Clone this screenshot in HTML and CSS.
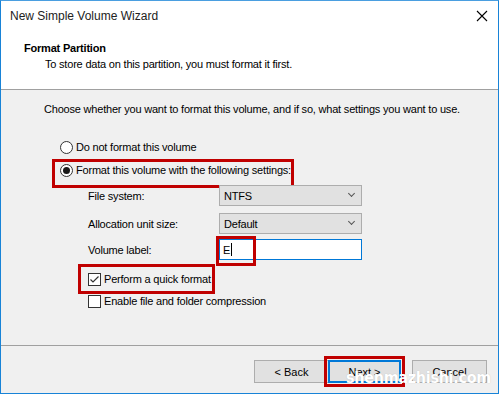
FILE: index.html
```html
<!DOCTYPE html>
<html>
<head>
	<title>New Simple Volume Wizard</title>
	<meta charset="utf-8">
	<link rel="stylesheet" href="styles.css">
</head>
<body>
<div class="window">
	<div class="titlebar">
		<span class="title">New Simple Volume Wizard</span>
		<svg class="close" width="12" height="12" viewBox="0 0 12 12"><path d="M1 1L11 11M11 1L1 11" stroke="#000" stroke-width="1.1"/></svg>
	</div>
	<div class="header">
		<div class="h-title">Format Partition</div>
		<div class="h-sub">To store data on this partition, you must format it first.</div>
	</div>
	<div class="main">
		<div class="intro">Choose whether you want to format this volume, and if so, what settings you want to use.</div>
		<div class="options">
			<div class="row radio-row">
				<span class="radio"></span>Do not format this volume
			</div>
			<div class="row radio-row marked mark-fmt">
				<span class="radio on"></span>Format this volume with the following settings:
			</div>
			<div class="settings">
				<div class="field">
					<span class="label">File system:</span>
					<div class="select">NTFS<span class="chev"></span></div>
				</div>
				<div class="field">
					<span class="label">Allocation unit size:</span>
					<div class="select">Default<span class="chev"></span></div>
				</div>
				<div class="field">
					<span class="label">Volume label:</span>
					<div class="input"><span class="val">E</span><span class="caret"></span><span class="mark-e"></span></div>
				</div>
				<div class="row check-row marked mark-quick">
					<span class="check on"><svg width="11" height="11" viewBox="0 0 11 11"><path d="M1.5 5.5L4 8L9.5 2.5" fill="none" stroke="#333" stroke-width="1.2"/></svg></span>Perform a quick format
				</div>
				<div class="row check-row">
					<span class="check"></span>Enable file and folder compression
				</div>
			</div>
		</div>
	</div>
	<div class="footer">
		<button class="btn">&lt; Back</button>
		<span class="next-mark"><button class="btn default">Next &gt;</button></span>
		<button class="btn">Cancel</button>
		<span class="watermark">shenmazhishi.com</span>
	</div>
</div>
</body>
</html>
```

FILE: styles.css
```css
*{
	margin: 0;
	padding: 0;
	box-sizing: border-box;
}
body{
	width: 499px;
	height: 394px;
	font-family: "Liberation Sans", Arial, sans-serif;
	font-size: 11px;
	letter-spacing: -0.2px;
	color: #000;
	background: #fff;
}
.window{
	width: 499px;
	height: 394px;
	border: 1px solid #1883d7;
	border-top-color: #4a9ee0;
	display: flex;
	flex-direction: column;
	background: #f0f0f0;
	position: relative;
}
.titlebar{
	height: 29px;
	background: #fff;
	display: flex;
	align-items: center;
	justify-content: space-between;
	padding: 0 10px 0 9px;
	font-size: 12px;
	letter-spacing: 0;
	color: #222;
}
.close{
	margin-top: 1px;
}
.header{
	height: 60px;
	background: #fff;
	border-bottom: 1px solid #a0a0a0;
	padding: 11px 0 0 23px;
}
.h-title{
	font-weight: bold;
	line-height: 15px;
}
.h-sub{
	padding-left: 21px;
	line-height: 15px;
	margin-top: 1px;
}
.main{
	flex: 1;
	padding: 12px 0 0 43px;
	border-bottom: 1px solid #a0a0a0;
}
.intro{
	line-height: 15px;
}
.options{
	margin-top: 23px;
	padding-left: 16px;
}
.row{
	display: flex;
	align-items: center;
	height: 15px;
	line-height: 15px;
}
.radio-row{
	margin-bottom: 8px;
}
.radio{
	width: 13px;
	height: 13px;
	border: 1px solid #333;
	border-radius: 50%;
	background: #fff;
	margin-right: 3px;
	display: flex;
	align-items: center;
	justify-content: center;
}
.radio.on::after{
	content: "";
	width: 7px;
	height: 7px;
	border-radius: 50%;
	background: #1a1a1a;
}
.marked{
	position: relative;
	width: fit-content;
}
.mark-fmt::before{
	content: "";
	position: absolute;
	left: -8px;
	top: -4px;
	right: -3px;
	height: 23px;
	border: 3px solid #c00000;
}
.settings{
	padding-left: 28px;
	margin-top: -1px;
}
.field{
	display: flex;
	align-items: center;
	height: 21px;
	margin-bottom: 7px;
}
.field:nth-child(2){
	margin-bottom: 5px;
}
.field:nth-child(3){
	margin-bottom: 0;
}
.label{
	width: 131px;
}
.select{
	width: 143px;
	height: 21px;
	background: #e1e1e1;
	border: 1px solid #adadad;
	padding-left: 4px;
	display: flex;
	align-items: center;
	position: relative;
}
.chev{
	position: absolute;
	right: 7px;
	top: 5px;
	width: 5px;
	height: 5px;
	border-right: 1px solid #555;
	border-bottom: 1px solid #555;
	transform: rotate(45deg);
}
.input{
	width: 143px;
	height: 21px;
	background: #fff;
	border: 1px solid #0078d7;
	padding-left: 3px;
	display: flex;
	align-items: center;
	position: relative;
}
.caret{
	width: 1px;
	height: 13px;
	background: #000;
	margin-left: 1px;
}
.mark-e{
	position: absolute;
	left: -4px;
	top: -4px;
	width: 40px;
	height: 30px;
	border: 3px solid #c00000;
}
.check-row{
	margin-top: 12px;
}
.check-row + .check-row{
	margin-top: 7px;
}
.mark-quick::before{
	content: "";
	position: absolute;
	left: -10px;
	top: -8px;
	right: -4px;
	bottom: -7px;
	border: 3px solid #c00000;
}
.check{
	width: 13px;
	height: 13px;
	border: 1px solid #333;
	background: #fff;
	margin-right: 3px;
	display: flex;
	align-items: center;
	justify-content: center;
}
.footer{
	height: 47px;
	display: flex;
	align-items: center;
	padding: 4px 0 0 253px;
	position: relative;
}
.btn{
	width: 75px;
	height: 23px;
	background: #e1e1e1;
	border: 1px solid #adadad;
	font-family: "Liberation Sans", Arial, sans-serif;
	font-size: 11px;
	color: #000;
}
.next-mark{
	margin-left: -5px;
	border: 3px solid #c00000;
	padding: 1px;
	display: flex;
}
.btn.default{
	border: 2px solid #0078d7;
	width: 73px;
}
.next-mark + .btn{
	margin-left: 7px;
}
.watermark{
	position: absolute;
	left: 345px;
	top: 22px;
	font-family: "DejaVu Sans Condensed", "DejaVu Sans", sans-serif;
	font-stretch: condensed;
	font-weight: bold;
	font-size: 16px;
	color: #fff;
	letter-spacing: -0.3px;
	text-shadow: 0 0 1px rgba(0,0,0,0.2);
}
```
